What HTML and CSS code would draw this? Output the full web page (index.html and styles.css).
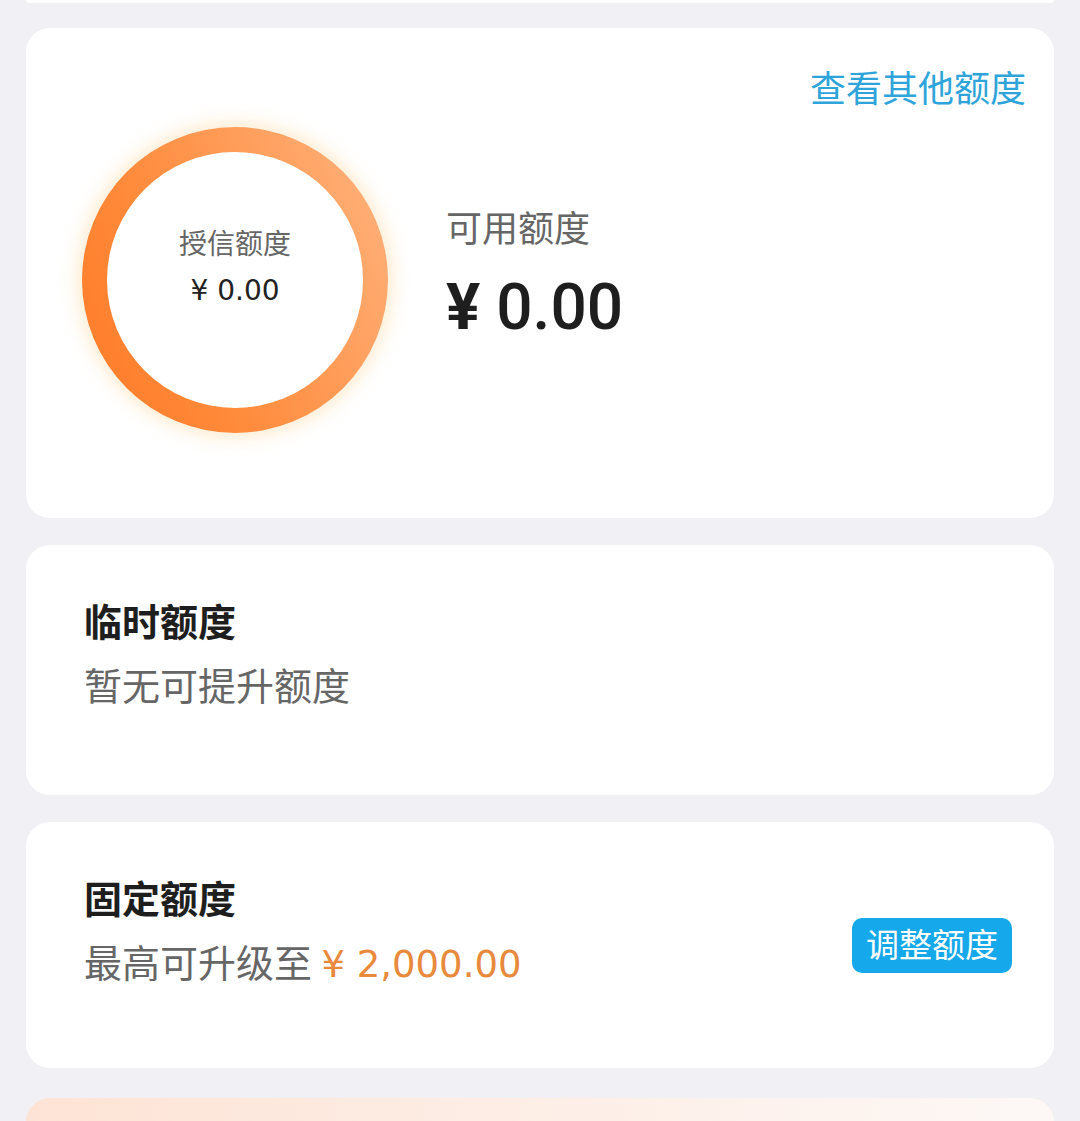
FILE: index.html
```html
<!DOCTYPE html>
<html lang="zh-CN">
<head>
<meta charset="utf-8">
<link rel="stylesheet" href="styles.css">
</head>
<body>
<div class="page">
  <div class="card card-prev"></div>

  <div class="card card-main">
    <div class="main-head">
      <span class="link">查看其他额度</span>
    </div>
    <div class="main-body">
      <div class="ring">
        <div class="ring-inner">
          <div class="ring-label">授信额度</div>
          <div class="ring-value">¥ 0.00</div>
        </div>
      </div>
      <div class="avail">
        <div class="avail-label">可用额度</div>
        <div class="avail-value"><span class="yen">¥</span> 0.00</div>
      </div>
    </div>
  </div>

  <div class="card card-row">
    <div class="row-text">
      <div class="row-title">临时额度</div>
      <div class="row-sub">暂无可提升额度</div>
    </div>
  </div>

  <div class="card card-row card-fixed">
    <div class="row-text">
      <div class="row-title">固定额度</div>
      <div class="row-sub">最高可升级至 <span class="amount">¥ 2,000.00</span></div>
    </div>
    <div class="btn">调整额度</div>
  </div>

  <div class="card card-promo"></div>
</div>
</body>
</html>
```

FILE: styles.css
```css
* { box-sizing: border-box; }
html, body {
  margin: 0;
  padding: 0;
  background: #f0f0f5;
  font-family: Roboto, "Noto Sans CJK SC", "Noto Sans", sans-serif;
  overflow: hidden;
}
.page {
  padding: 0 26px;
  display: flex;
  flex-direction: column;
}
.card {
  background: #ffffff;
  border-radius: 24px;
}
.card-prev {
  height: 3px;
  border-radius: 0 0 24px 24px;
}
.card-main {
  margin-top: 25px;
  height: 490px;
  padding: 40px 28px 0 56px;
  display: flex;
  flex-direction: column;
}
.main-head {
  display: flex;
  justify-content: flex-end;
}
.link {
  font-size: 36px;
  line-height: 44px;
  color: #2ea4da;
}
.main-body {
  margin-top: 15px;
  display: flex;
  align-items: flex-start;
}
.ring {
  width: 306px;
  height: 306px;
  border-radius: 50%;
  padding: 25px;
  background: linear-gradient(65deg, #ff7a26 0%, #ff8a3a 35%, #ff9d5a 65%, #ffb581 100%);
  box-shadow: 0 0 18px 4px rgba(255, 195, 110, 0.35);
  flex-shrink: 0;
}
.ring-inner {
  width: 100%;
  height: 100%;
  border-radius: 50%;
  background: #ffffff;
  display: flex;
  flex-direction: column;
  align-items: center;
  justify-content: center;
  padding-bottom: 24px;
}
.ring-label {
  font-size: 28px;
  line-height: 40px;
  color: #666666;
}
.ring-value {
  margin-top: 6px;
  font-family: "DejaVu Sans", Roboto, sans-serif;
  font-size: 28px;
  line-height: 40px;
  color: #222222;
}
.avail {
  margin-left: 58px;
  margin-top: 81px;
}
.avail-label {
  font-size: 36px;
  line-height: 44px;
  color: #666666;
}
.avail-value {
  margin-top: 20px;
  font-size: 64px;
  line-height: 72px;
  font-weight: 500;
  color: #1e1e1e;
}
.avail-value .yen {
  font-weight: 700;
}
.card-row {
  margin-top: 27px;
  height: 250px;
  padding: 46px 42px 0 58px;
  display: flex;
  align-items: flex-start;
  justify-content: space-between;
}
.card-fixed {
  height: 246px;
}
.card-fixed .btn {
  align-self: center;
  margin-top: -46px;
}
.row-title {
  font-size: 38px;
  line-height: 64px;
  font-weight: 700;
  color: #1e1e1e;
}
.row-sub {
  font-size: 38px;
  line-height: 64px;
  color: #666666;
}
.amount {
  font-family: "DejaVu Sans", Roboto, sans-serif;
  font-size: 37px;
  color: #e8893c;
}
.btn {
  height: 55px;
  padding: 0 14px;
  border-radius: 10px;
  background: #15a8ea;
  color: #ffffff;
  font-size: 33px;
  line-height: 55px;
}
.card-promo {
  margin-top: 30px;
  height: 60px;
  background: linear-gradient(90deg, #fde3d5 0%, #fdeee6 50%, #fdf8f6 100%);
}
```
